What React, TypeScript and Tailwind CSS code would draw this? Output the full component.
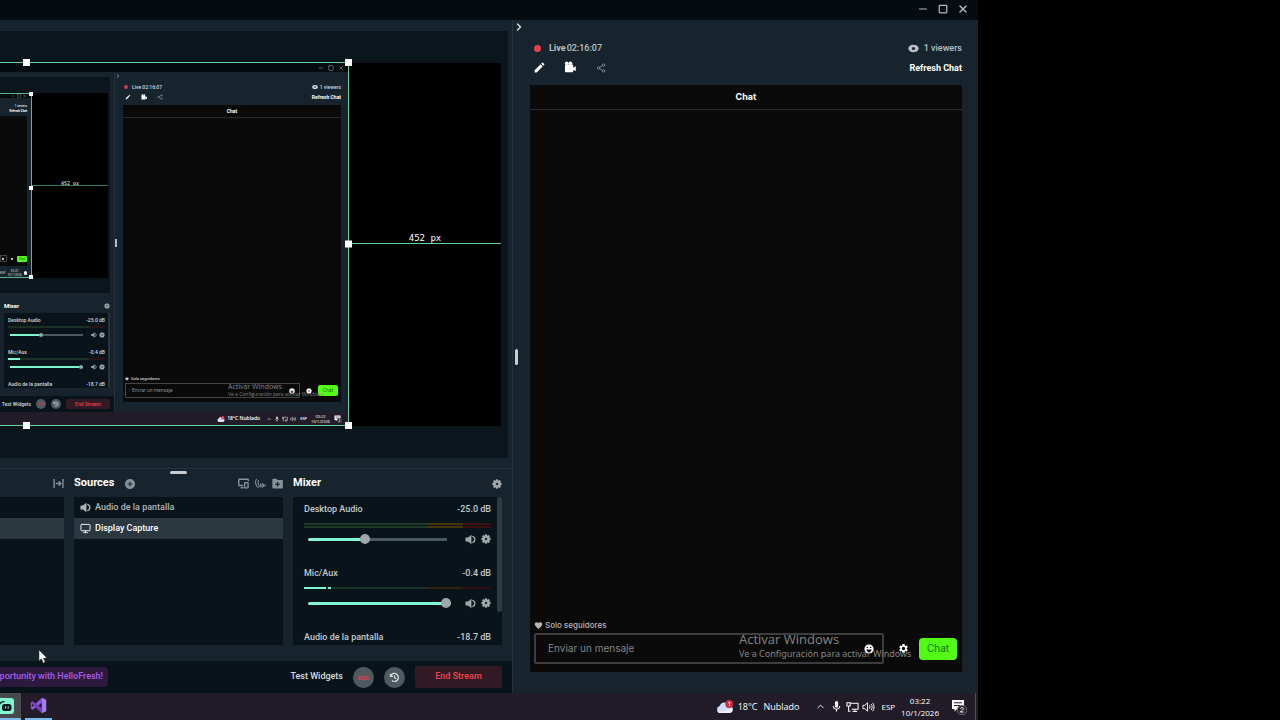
import React from "react";
import { Minus, X, Square, ChevronRight, ChevronUp, Share2, Monitor } from "lucide-react";
import { MdEdit, MdAddCircle, MdSettings, MdMic, MdFavorite } from "react-icons/md";

type IconProps = { className?: string };

function Speaker({ className }: IconProps) {
  return (
    <svg viewBox="0 0 12 12" className={className} aria-hidden="true">
      <path d="M1 3.800h2.200L7 .700v10.600L3.200 8.200H1a.5.5 0 0 1-.5-.5V4.300a.5.5 0 0 1 .5-.5z" fill="currentColor" />
      <path d="M8.500 2.600c3 1.200 3 5.600 0 6.800" fill="none" stroke="currentColor" strokeWidth="1.500" strokeLinecap="round" />
    </svg>
  );
}

function Gear({ className }: IconProps) {
  const teeth = [0, 45, 90, 135];
  return (
    <svg viewBox="0 0 12 12" className={className} aria-hidden="true">
      {teeth.map((a) => (
        <rect key={a} x="4.6" y="0.4" width="2.8" height="11.2" rx="0.8" fill="currentColor" transform={`rotate(${a} 6 6)`} />
      ))}
      <circle cx="6" cy="6" r="4.2" fill="currentColor" />
      <circle cx="6" cy="6" r="1.4" fill="#16222a" />
    </svg>
  );
}

function Replay({ className }: IconProps) {
  return (
    <svg viewBox="0 0 12 12" className={className} aria-hidden="true">
      <path d="M2.600 3.200A4.300 4.300 0 1 1 3.200 9.300" fill="none" stroke="currentColor" strokeWidth="1.500" />
      <path d="M.9 1.300v4.200h4.200z" fill="currentColor" />
      <path d="M6.200 3.800v2.600l1.900 1.100" fill="none" stroke="currentColor" strokeWidth="1.200" />
    </svg>
  );
}

function Camera({ className }: IconProps) {
  return (
    <svg viewBox="0 0 12 12" className={className} aria-hidden="true" fill="currentColor">
      <circle cx="2.6" cy="2.300" r="1.700" />
      <circle cx="6.300" cy="2.300" r="1.900" />
      <rect x="1" y="3.600" width="8.200" height="7.600" rx="0.800" />
      <path d="M8.600 7l3.200-1.800v4.800l-3.200-1.200z" />
    </svg>
  );
}

function Eye({ className }: IconProps) {
  return (
    <svg viewBox="0 0 12 12" className={className} aria-hidden="true">
      <ellipse cx="6" cy="6" rx="5.600" ry="4.200" fill="currentColor" />
      <circle cx="6" cy="6" r="1.700" fill="#17242d" />
    </svg>
  );
}

function Collapse({ className }: IconProps) {
  return (
    <svg viewBox="0 0 12 12" className={className} aria-hidden="true" fill="none" stroke="currentColor" strokeWidth="1.500">
      <path d="M1.200 1v10M10.800 1v10M3 6h5.500M6.200 3.600L8.600 6 6.200 8.400" />
    </svg>
  );
}

function Screens({ className }: IconProps) {
  return (
    <svg viewBox="0 0 12 12" className={className} aria-hidden="true" fill="none" stroke="currentColor" strokeWidth="1.500">
      <path d="M5.500 8.200H1.400a.6.600 0 0 1-.6-.6V2a.6.600 0 0 1 .6-.6h9.200a.6.600 0 0 1 .6.600v1.500M3 10.600h3" />
      <rect x="7.200" y="5" width="3.800" height="5.800" rx="0.600" />
    </svg>
  );
}

function Waves({ className }: IconProps) {
  return (
    <svg viewBox="0 0 12 12" className={className} aria-hidden="true" fill="none" stroke="currentColor" strokeWidth="1.100">
      <path d="M1.800 1C-.3 4 .3 8.600 4 11M4 2.500C2.800 5 3.200 7.500 5.300 9.500M6.200 6v4M7.800 5.500v5M9.400 6.200v3.600M11 6.800v2.400" />
    </svg>
  );
}

function FolderPlus({ className }: IconProps) {
  return (
    <svg viewBox="0 0 12 12" className={className} aria-hidden="true">
      <path d="M1.200.800h3.600L6 2.300h5a.8.800 0 0 1 .8.800v7.600a.8.800 0 0 1-.8.800H1.200a.8.800 0 0 1-.8-.800V1.600a.8.800 0 0 1 .8-.800z" fill="currentColor" />
      <path d="M6 4.400v5M3.500 6.900h5" stroke="#17242d" strokeWidth="1.500" />
    </svg>
  );
}

function Smile({ className }: IconProps) {
  return (
    <svg viewBox="0 0 12 12" className={className} aria-hidden="true">
      <circle cx="6" cy="6" r="5.500" fill="#fff" />
      <path d="M3 6.600h6a3 3 0 0 1-6 0z" fill="#0a0a0b" />
      <circle cx="4" cy="4.300" r="0.900" fill="#0a0a0b" />
      <circle cx="8" cy="4.300" r="0.900" fill="#0a0a0b" />
    </svg>
  );
}

function Cloud({ className }: IconProps) {
  return (
    <svg viewBox="0 0 18 14" className={className} aria-hidden="true">
      <path d="M4 13a3.600 3.600 0 0 1-.3-7A5 5 0 0 1 13 5.500a3.800 3.800 0 0 1 .8 7.500z" fill="#cfdcf8" />
      <path d="M4 13a3.600 3.600 0 0 1-3-2c4 1 9 0 15.500-2.500A3.800 3.800 0 0 1 13.800 13z" fill="#eef1fb" />
      <circle cx="13.200" cy="4" r="3.900" fill="#d3293a" />
      <path d="M13.500 2v4M12.500 2.800l1-.8" stroke="#fff" strokeWidth="1.100" fill="none" />
    </svg>
  );
}

function Network({ className }: IconProps) {
  return (
    <svg viewBox="0 0 14 12" className={className} aria-hidden="true" fill="none" stroke="currentColor" strokeWidth="1.100">
      <path d="M5 2h8v6.500H6M7 10.800h5M9.500 8.500v2M1 1.500h3.500v3.500H1zM2.800 5v5.500h2" />
    </svg>
  );
}

function TraySound({ className }: IconProps) {
  return (
    <svg viewBox="0 0 14 12" className={className} aria-hidden="true" fill="none" stroke="currentColor" strokeWidth="1">
      <path d="M1 4.200h2L6 1.500v9L3 7.800H1zM8 4.200c.8 1 .8 2.600 0 3.600M9.800 2.800c1.500 1.800 1.500 4.600 0 6.400M11.500 1.500c2 2.600 2 6.400 0 9" />
    </svg>
  );
}

function Notice({ className }: IconProps) {
  return (
    <svg viewBox="0 0 16 16" className={className} aria-hidden="true">
      <path d="M1 1h12v9H6l-2.500 2.500V10H1z" fill="#fff" />
      <path d="M3 3.800h8M3 6.500h6" stroke="#211c27" strokeWidth="1" />
      <circle cx="11" cy="11" r="4.800" fill="#2b2631" stroke="#8a878e" strokeWidth="0.700" />
      <path d="M9.500 9.600c.3-1.500 3-1.400 2.800.2-.1 1-1.600 1.700-2.900 3.200h3.100" fill="none" stroke="#fff" strokeWidth="1" />
    </svg>
  );
}

function StudioLogo({ className }: IconProps) {
  return (
    <svg viewBox="0 0 18 18" className={className} aria-hidden="true">
      <path d="M12.500.800L17.200 3v12l-4.700 2.200z" fill="#a77bea" />
      <path d="M12.500.800L.8 12l2 1.800L12.500 6z" fill="#8b56d8" />
      <path d="M12.500 17.200L.8 6l2-1.800L12.500 12z" fill="#7440c0" />
      <path d="M.8 6l1.200-1v8l-1.200-1z" fill="#8b56d8" />
    </svg>
  );
}

function LabsLogo({ className }: IconProps) {
  return (
    <svg viewBox="0 0 16 16" className={className} aria-hidden="true">
      <rect width="16" height="16" rx="3" fill="#80f5d2" />
      <path d="M1 7.500c1-3 3-4 5.500-3.800" fill="none" stroke="#09161d" strokeWidth="1.300" />
      <rect x="4" y="6" width="9.500" height="7" rx="2.800" fill="#09161d" />
      <path d="M7.500 8.500v2M10.200 8.500v2" stroke="#80f5d2" strokeWidth="1.200" />
    </svg>
  );
}

/* ---------- Nested capture previews ---------- */

function TinyCapture() {
  return (
    <div className="relative flex min-w-0 flex-1 flex-col border-y border-r border-[#57b893] bg-[#17242d]">
      <div className="flex h-1 justify-end gap-0.5 bg-[#040c12] pr-1 text-[#9aa3a8]">
        <Minus className="size-1" />
        <Square className="size-1" />
        <X className="size-1" />
      </div>
      <div className="flex flex-col items-end pt-1.5 pr-1 pb-0 text-[3px] leading-[5px] font-bold text-white">
        <span className="font-normal">1 viewers</span>
        <span>Refresh Chat</span>
      </div>
      <div className="mt-0.5 mr-1 flex flex-1 flex-col justify-end bg-[#0a0a0b] pb-1">
        <div className="flex items-center justify-end gap-1">
          <span className="flex h-[7px] flex-1 items-center justify-end border border-[#444] pr-0.5"><i className="size-0.5 rounded-full bg-white" /></span>
          <i className="size-0.5 rounded-full bg-white" />
          <span className="w-2.5 rounded-[1px] bg-[#53fc18] text-center text-[3px] leading-[6px] text-[#0d4d06]">Chat</span>
        </div>
      </div>
      <div className="mt-0.5 flex h-[9px] items-center justify-end gap-0.5 pr-1 text-[3px] leading-[4px] text-[#ddd]">
        <span>ESP</span>
        <span className="text-center">03:22<br />10/1/2026</span>
        <i className="size-1 rounded-full bg-white" />
      </div>
      <i className="absolute -top-0.5 -right-0.5 size-1 bg-white" />
      <i className="absolute top-1/2 -right-0.5 size-1 bg-white" />
      <i className="absolute -right-0.5 -bottom-0.5 size-1 bg-white" />
    </div>
  );
}

function MiniChannel({ name, level, meter, fader }: { name: string; level: string; meter: React.ReactNode; fader: React.ReactNode }) {
  return (
    <div className="h-8 shrink-0">
      <div className="flex justify-between text-[5px] leading-[8px] font-medium text-[#d3d9dc]">
        <span>{name}</span>
        <span>{level}</span>
      </div>
      <div className="mt-0.5 flex h-0.5">{meter}</div>
      <div className="mt-1 flex items-center gap-1 pl-0.5 text-[#9aa3a8]">
        <div className="relative mr-1 flex h-0.5 flex-1 bg-[#4b5a61]">{fader}</div>
        <Speaker className="size-1.5" />
        <Gear className="-ml-0.5 size-1.5" />
      </div>
    </div>
  );
}

function MiniEditor() {
  return (
    <div className="flex w-[115px] shrink-0 flex-col border-r border-[#24323a]">
      <div className="mt-[5px] mr-1 flex flex-1 flex-col bg-[#0b151c] pt-4 pr-0.5 pb-[15px]">
        <div className="flex flex-1 bg-black">
          <div className="flex w-8">
            <TinyCapture />
          </div>
          <div className="flex flex-1 flex-col justify-center pb-1 text-center font-['DejaVu_Sans_Mono',monospace] text-[5px] leading-[4px] text-white">
            <span>452 px</span>
            <i className="h-px bg-[#3a805f]" />
          </div>
        </div>
      </div>
      <div className="flex h-[103px] flex-col pt-[9px] pr-1 pl-1">
        <div className="flex items-center justify-between text-[6px] leading-[8px] font-bold text-white">
          <span>Mixer</span>
          <Gear className="size-1.5 text-[#9aa3a8]" />
        </div>
        <div className="mt-[3px] flex h-[75px] flex-col overflow-hidden border-r-2 border-[#26343b] bg-[#09141a] pt-[3px] pr-[3px] pl-1">
          <MiniChannel
            name="Desktop Audio"
            level="-25.0 dB"
            meter={<><i className="flex-1 bg-[#1b2f23]" /><i className="w-4 bg-[#2c1116]" /></>}
            fader={<><i className="w-2/5 bg-[#80f5d2]" /><i className="-mt-px size-1 rounded-full bg-[#a0a6a9]" /></>}
          />
          <MiniChannel
            name="Mic/Aux"
            level="-0.4 dB"
            meter={<><i className="w-3 bg-[#80f5d2]" /><i className="flex-1 bg-[#1b2f23]" /><i className="w-4 bg-[#2c1116]" /></>}
            fader={<><i className="flex-1 bg-[#80f5d2]" /><i className="-mt-px size-1 rounded-full bg-[#a0a6a9]" /></>}
          />
          <MiniChannel name="Audio de la pantalla" level="-18.7 dB" meter={null} fader={null} />
        </div>
      </div>
      <div className="flex h-4 items-center justify-end gap-[5px] bg-[#09141a] pr-1 text-[5px] leading-[8px] font-medium whitespace-nowrap text-[#d8dcde]">
        <span>Test Widgets</span>
        <span className="flex size-2.5 items-center justify-center rounded-full bg-[#4f5a60] text-[3px] text-[#d23b45]">REC</span>
        <span className="flex size-2.5 items-center justify-center rounded-full bg-[#4f5a60]"><Replay className="size-1.5" /></span>
        <span className="w-11 rounded-[1px] bg-[#321a24] py-px text-center text-[#e5404b]">End Stream</span>
      </div>
    </div>
  );
}

function MiniChat() {
  return (
    <div className="flex min-w-0 flex-1 flex-col pr-[7px] pb-[10px] pl-2">
      <div className="flex justify-between pt-[11px] text-[5px] leading-[8px] font-medium text-[#d3d9dc]">
        <span className="flex items-center gap-1 pl-px"><i className="size-1 rounded-full bg-[#c3404c]" />Live 02:16:07</span>
        <span className="flex items-center gap-0.5"><Eye className="size-1.5" />1 viewers</span>
      </div>
      <div className="mt-0.5 flex justify-between text-[5px] leading-[8px] font-bold text-white">
        <span className="flex items-center gap-2.5 pl-0.5"><MdEdit className="size-1.5" /><Camera className="size-1.5" /><Share2 className="size-1.5 text-[#87939a]" /></span>
        <span>Refresh Chat</span>
      </div>
      <div className="relative mt-1 flex flex-1 flex-col bg-[#0a0a0b]">
        <div className="border-b border-[#29292b] text-center text-[5px] leading-[12px] font-bold text-white">Chat</div>
        <div className="flex-1" />
        <div className="flex items-center gap-0.5 pl-0.5 text-[4px] leading-[6px] font-medium text-[#ccc]"><MdFavorite className="size-1" />Solo seguidores</div>
        <div className="mt-px mb-1 flex items-center pr-[3px] pl-0.5">
          <span className="flex h-[15px] flex-1 items-center justify-between border border-[#444] px-1.5 pr-1 text-[5px] text-[#888]">Enviar un mensaje<Smile className="size-1.5" /></span>
          <Gear className="mx-1.5 size-1.5 text-white" />
          <span className="w-5 rounded-xs bg-[#53fc18] text-center text-[5px] leading-[11px] text-[#16730b]">Chat</span>
        </div>
        <div className="absolute right-[18px] bottom-1 w-[95px] font-['Open_Sans',sans-serif] whitespace-nowrap text-[#858585]">
          <div className="text-[7px] leading-[8px]">Activar Windows</div>
          <div className="text-[5px] leading-[7px]">Ve a Configuración para activar Windows</div>
        </div>
      </div>
    </div>
  );
}

function DisplayCapture() {
  return (
    <div className="relative flex min-w-0 flex-1 flex-col border-y border-r border-[#66cfa8] bg-[#17242d]">
      <div className="flex h-[9px] items-center justify-end gap-1 bg-[#040c12] pr-1 text-[#aab1b5]">
        <Minus className="size-1.5" />
        <Square className="size-1.5" />
        <X className="size-1.5" />
      </div>
      <div className="flex flex-1">
        <div className="flex flex-1 justify-end overflow-hidden"><MiniEditor /></div>
        <div className="relative flex w-[233px] shrink-0">
          <MiniChat />
          <ChevronRight className="absolute top-px left-0 size-1.5 text-white" />
          <i className="absolute top-[167px] left-0 h-2 w-0.5 bg-[#b4babd]" />
        </div>
      </div>
      <div className="flex h-[13px] items-center justify-end gap-0.5 bg-[#211c27] pr-1.5 font-['Open_Sans',sans-serif] text-[5px] leading-[5px] font-semibold text-white">
        <Cloud className="size-2" />
        <span className="mr-1">18°C Nublado</span>
        <ChevronUp className="size-1.5" />
        <MdMic className="size-1.5" />
        <Network className="size-1.5" />
        <TraySound className="size-1.5" />
        <span className="ml-0.5 text-[4px]">ESP</span>
        <span className="px-0.5 text-center text-[4px] font-normal">03:22<br />10/1/2026</span>
        <Notice className="size-2" />
      </div>
      <i className="absolute -top-1 right-[318px] size-[7px] bg-white" />
      <i className="absolute -top-1 -right-1 size-[7px] bg-white" />
      <i className="absolute top-1/2 -right-1 size-[7px] -translate-y-1/2 bg-white" />
      <i className="absolute -right-1 -bottom-1 size-[7px] bg-white" />
      <i className="absolute right-[318px] -bottom-1 size-[7px] bg-white" />
    </div>
  );
}

/* ---------- Editor ---------- */

const slider =
  "h-[3px] min-w-0 flex-1 appearance-none rounded-sm [&::-webkit-slider-thumb]:size-[10px] [&::-webkit-slider-thumb]:appearance-none [&::-webkit-slider-thumb]:rounded-full [&::-webkit-slider-thumb]:bg-[#a0a6a9]";

function Channel({ name, level, value, fill, meter }: { name: string; level: string; value: number; fill: string; meter: React.ReactNode }) {
  return (
    <div className="h-16 shrink-0">
      <div className="flex justify-between leading-4">
        <span>{name}</span>
        <span>{level}</span>
      </div>
      <div className="mt-[6px] h-[7px]">{meter}</div>
      <div className="mt-[3px] flex h-3 items-center text-[#a0a6a9]">
        <input type="range" aria-label={`${name} volume`} min={0} max={100} defaultValue={value} className={`ml-1 ${slider} ${fill}`} />
        <button aria-label={`Mute ${name}`} className="ml-[14px]"><Speaker className="size-[11px]" /></button>
        <button aria-label={`${name} settings`} className="ml-[5px]"><Gear className="size-[10px]" /></button>
      </div>
    </div>
  );
}

function Mixer() {
  return (
    <section className="flex min-w-0 flex-col">
      <header className="flex h-[27px] items-center justify-between text-white">
        <h2 className="text-[11px] font-bold">Mixer</h2>
        <button aria-label="Mixer settings" className="text-[#a0a6a9]"><Gear className="size-[10px]" /></button>
      </header>
      <div className="flex h-[148px] overflow-hidden bg-[#09141a] text-[9px] font-medium text-[#c3cacd]">
        <div className="flex min-w-0 flex-1 flex-col pt-1 pl-[11px]">
          <Channel
            name="Desktop Audio"
            level="-25.0 dB"
            value={39}
            fill="bg-[linear-gradient(to_right,#80f5d2_39%,#4b5a61_39%,#4b5a61_97%,transparent_97%)]"
            meter={
              <div className="flex h-[5px] flex-col justify-between">
                {[0, 1].map((k) => (
                  <div key={k} className="flex h-0.5"><i className="flex-1 bg-[#1e3b2a]" /><i className="w-9 bg-[#49330f]" /><i className="w-7 bg-[#3c0f13]" /></div>
                ))}
              </div>
            }
          />
          <Channel
            name="Mic/Aux"
            level="-0.4 dB"
            value={100}
            fill="bg-[#80f5d2]"
            meter={
              <div className="flex h-0.5"><i className="w-[22px] bg-[#80f5d2]" /><i className="w-0.5" /><i className="w-[3px] bg-[#80f5d2]" /><i className="flex-1 bg-[#1b3029]" /><i className="w-9 bg-[#33200f]" /><i className="w-7 bg-[#2c0d12]" /></div>
            }
          />
          <Channel name="Audio de la pantalla" level="-18.7 dB" value={50} fill="bg-[#4b5a61]" meter={null} />
        </div>
        <div className="ml-[6px] h-[115px] w-[5px] rounded-sm bg-[#2e3b42]" />
      </div>
    </section>
  );
}

function Sources() {
  return (
    <section className="flex min-w-0 flex-col">
      <header className="flex h-[27px] items-center text-[#87939a]">
        <h2 className="text-[11px] font-bold text-white">Sources</h2>
        <button aria-label="Add source" className="ml-[10px]"><MdAddCircle className="size-[12px]" /></button>
        <button aria-label="Screens" className="ml-auto"><Screens className="size-[11px]" /></button>
        <button aria-label="Audio sources" className="ml-[6px]"><Waves className="size-[11px]" /></button>
        <button aria-label="Add folder" className="ml-[6px]"><FolderPlus className="size-[11px]" /></button>
      </header>
      <ul className="h-[148px] bg-[#09141a] text-[9px] font-medium">
        <li className="flex h-[21px] items-center gap-1 pl-[6px] text-[#b0b6b9]"><Speaker className="size-[11px]" />Audio de la pantalla</li>
        <li className="flex h-[21px] items-center gap-1 bg-[#2b383f] pl-[6px] text-white"><Monitor className="size-[11px]" />Display Capture</li>
      </ul>
    </section>
  );
}

function Scenes() {
  return (
    <section className="flex min-w-0 flex-col" aria-label="Scenes">
      <header className="flex h-[27px] items-center justify-end text-[#87939a]">
        <button aria-label="Transitions"><Collapse className="size-[11px]" /></button>
      </header>
      <div className="h-[148px] bg-[#09141a] pt-[21px]"><div className="h-[21px] bg-[#2b383f]" /></div>
    </section>
  );
}

function Editor() {
  return (
    <main className="relative flex min-w-0 flex-1 flex-col border-r border-[#22313a]">
      <div className="mt-[11px] mr-1 flex flex-1 flex-col bg-[#0b151c] pt-[31px] pr-[7px] pb-8">
        <div className="flex flex-1">
          <DisplayCapture />
          <div className="mt-px flex w-[152px] flex-col justify-center bg-black pb-3 text-center font-['DejaVu_Sans_Mono',monospace] text-[9px] leading-[10px] text-white">
            <span>452 px</span>
            <i className="h-px bg-[#66cfa8]" />
          </div>
        </div>
      </div>
      <div className="mt-[10px] h-0.5 border-t border-[#22313a]" />
      <div className="-mb-[6px] flex h-[6px] justify-center pt-px pr-[155px]"><i className="h-[3px] w-[17px] rounded-full bg-[#c8cdd0]" /></div>
      <div className="grid grid-cols-[64fr_209fr_209fr] gap-x-[10px] pr-[10px] pb-4">
        <Scenes />
        <Sources />
        <Mixer />
      </div>
      <footer className="flex h-8 items-center bg-[#09141a] pr-[10px] text-[9px] font-medium text-[#d8dcde]">
        <div className="flex h-5 w-[108px] items-center justify-end rounded-r bg-[#2b1a3e] pr-[5px] whitespace-nowrap text-[#a85ce8]">portunity with HelloFresh!</div>
        <button className="ml-auto">Test Widgets</button>
        <button className="ml-[10px] flex size-[21px] items-center justify-center rounded-full bg-[#4f5a60] text-[6px] font-bold text-[#e03f49]">REC</button>
        <button aria-label="Replay buffer" className="mx-[10px] flex size-[21px] items-center justify-center rounded-full bg-[#4f5a60]"><Replay className="size-[11px]" /></button>
        <button className="h-[22px] w-[87px] rounded-xs bg-[#321a24] text-[#ec4552]">End Stream</button>
      </footer>
      <svg viewBox="0 0 10 15" className="absolute bottom-[29px] left-[38px] h-[15px] w-[10px]" aria-hidden="true">
        <path d="M1 1v11l2.500-2.200L5.200 14l2-.800-1.700-4L9 9z" fill="#fff" stroke="#222" strokeWidth="0.500" />
      </svg>
    </main>
  );
}

/* ---------- Chat ---------- */

function ChatPanel() {
  return (
    <aside className="relative flex w-[465px] shrink-0 flex-col pr-4 pb-[21px] pl-[17px]">
      <button aria-label="Collapse chat" className="absolute top-px left-0 text-[#d8dcde]"><ChevronRight className="size-3" strokeWidth={3} /></button>
      <i className="absolute top-[329px] left-0.5 h-4 w-[3px] rounded-full bg-[#c8cdd0]" />
      <div className="flex items-center justify-between pt-5 text-[9px] leading-4 font-medium text-[#b9c0c4]">
        <span className="flex items-center pl-[4px]"><i className="mr-2 size-[7px] rounded-full bg-[#e5404b]" /><b className="mr-px font-bold">Live</b>02:16:07</span>
        <span className="flex items-center gap-[5px]"><Eye className="size-[11px]" />1 viewers</span>
      </div>
      <div className="mt-1 flex h-4 items-center justify-between text-white">
        <div className="flex items-center pb-0.5 pl-[3px]">
          <button aria-label="Edit stream"><MdEdit className="size-[13px]" /></button>
          <button aria-label="Open clip" className="ml-[18px]"><Camera className="size-3" /></button>
          <button aria-label="Share" className="ml-5 pt-0.5 text-[#87939a]"><Share2 className="size-[10px]" /></button>
        </div>
        <button className="text-[9px] leading-4 font-bold">Refresh Chat</button>
      </div>
      <div className="relative mt-[9px] flex flex-1 flex-col bg-[#0a0a0b] font-[Inter,sans-serif]">
        <h2 className="h-[25px] border-b border-[#2b2b2d] text-center text-[9px] leading-6 font-bold text-white">Chat</h2>
        <div className="flex-1" />
        <p className="flex items-center gap-0.5 pl-1 text-[8px] leading-4 font-medium text-[#b5b5b5]"><MdFavorite className="size-[9px]" />Solo seguidores</p>
        <form className="mb-2 flex items-center pr-[5px] pl-1">
          <div className="flex h-[31px] min-w-0 flex-1 items-center rounded-xs border-2 border-[#3d3d3f] px-3 pr-[8px]">
            <input aria-label="Mensaje" placeholder="Enviar un mensaje" className="min-w-0 flex-1 bg-transparent text-[10px] outline-none placeholder:text-[#858585]" />
            <button type="button" aria-label="Emotes"><Smile className="size-[10px]" /></button>
          </div>
          <button type="button" aria-label="Chat settings" className="mr-[10px] ml-[14px] text-white"><MdSettings className="size-[11px]" /></button>
          <button type="button" className="z-10 h-[22px] w-[38px] rounded-sm bg-[#53fc18] text-[10px] text-[#16730b]">Chat</button>
        </form>
        <div className="pointer-events-none absolute right-[42px] bottom-[11px] w-[181px] whitespace-nowrap text-[#858585]">
          <div className="font-['Open_Sans',sans-serif] text-[13px] leading-4">Activar Windows</div>
          <div className="font-['Noto_Sans',sans-serif] text-[9px] leading-[14px]">Ve a Configuración para activar Windows</div>
        </div>
      </div>
    </aside>
  );
}

function Taskbar() {
  return (
    <nav className="flex h-[27px] items-center bg-[#211c27] font-['Open_Sans',sans-serif] text-white">
      <button aria-label="Streamlabs" className="flex h-full w-[21px] items-center border-b-2 border-[#79b8ea] bg-[#48484d]"><LabsLogo className="-ml-0.5 size-4" /></button>
      <button aria-label="Visual Studio" className="ml-1 flex h-full w-[27px] items-center justify-center border-b-2 border-[#79b8ea]"><StudioLogo className="size-[17px]" /></button>
      <div className="ml-auto flex items-center text-[9px] leading-3">
        <Cloud className="mr-1 h-[14px] w-[18px]" />
        <span className="mr-[6px]">18°C</span>
        <span>Nublado</span>
        <button aria-label="Hidden icons" className="mr-1 ml-4"><ChevronUp className="size-[11px]" /></button>
        <MdMic className="mr-[3px] size-[13px]" />
        <Network className="mr-[3px] h-[12px] w-[13px]" />
        <TraySound className="mr-[6px] h-[12px] w-[13px]" />
        <span className="mr-1.5 text-[8px]">ESP</span>
        <span className="mr-3 text-center text-[8px]">03:22<br />10/1/2026</span>
        <Notice className="mr-2 size-4" />
      </div>
      <i className="mr-0.5 h-full w-px bg-[#54505a]" />
    </nav>
  );
}

export default function App() {
  return (
    <div className="flex h-screen bg-black font-[Roboto,sans-serif]">
      <div className="flex min-w-0 flex-1 flex-col overflow-hidden bg-[#17242d]">
        <header className="flex h-5 shrink-0 items-center justify-end gap-2 bg-[#040c12] pr-[9px] pb-0.5 text-[#b4b9bc]">
          <button aria-label="Minimize"><Minus className="size-3" /></button>
          <button aria-label="Maximize" className="px-px"><Square className="size-[10px]" strokeWidth={3} /></button>
          <button aria-label="Close"><X className="size-3" strokeWidth={3} /></button>
        </header>
        <div className="flex min-h-0 flex-1">
          <Editor />
          <ChatPanel />
        </div>
        <Taskbar />
      </div>
      <div className="w-[302px] shrink-0" />
    </div>
  );
}
